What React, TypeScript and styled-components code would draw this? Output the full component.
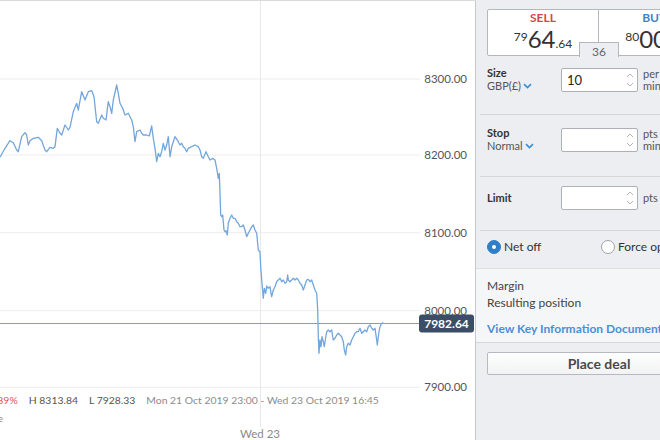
import React from 'react';
import styled, { createGlobalStyle } from 'styled-components';

const GlobalStyle = createGlobalStyle`
  html, body {
    margin: 0;
    padding: 0;
    background: #fff;
    overflow: hidden;
  }
  body {
    font-family: Lato, "Open Sans", "Liberation Sans", sans-serif;
    color: #333;
  }
`;

// traced price series (x, y in chart pixels)
const series = `0,157.3 5,148.3 10,140.7 13.3,142.7 16.7,150 18.3,151.7 21.7,136.7 25,132.7 26.7,135 28.3,145 30,140.7 33.3,138.3 38.3,137.3 41.7,140.7 45,150 46.7,151.7 50,147.3 53.3,148.3 55,146.7 57.3,128.3 60,133.3 61.7,135 65,125 68.3,130 70,127.3 73.3,111.7 76.7,103.3 78.3,110 81.7,91.7 85,100 88.3,91.7 91.7,90.7 94,96.7 96.7,121.7 98.3,123.3 101.7,115 103.3,118.3 106,120 108.3,101.7 110,106.7 111.7,113.3 113.3,100 116.7,85 118.3,93.3 120,103.3 122.7,108.3 125,115 128.3,113.3 130,116.7
131.7,120 133.3,126.7 135,141.7 136.7,131.7 140,130 141.7,133.3 143.3,135 146.7,135 149.3,136 151.7,126 153.3,138.3 155,148.3 156.7,161.7 158.3,153.3 160,156.7 161.7,151.7 163.3,143.3 165,150 166.7,145 168.3,136.7 170,156.7 171.7,146.7 175,136.7 178.3,141.7 180,145 181.7,143.3 183.3,146.7 185,148.3 186.7,151.7 188.3,148.3 191.7,146.7 195,145 198.3,146.7 200,150 201.7,156.7 203.3,158.3 206,151.7 208.3,156.7 210,160 212.7,158.3 215,160 216.7,168.3 218.3,178.3 219.3,173.3 220,193.3
220.7,215 221.7,216.7 222.7,215 224,230 225,231.7 226,230.7 227.3,235 228.3,223.3 230,218.3 231.7,215 233.3,218.3 235,218.3 236.7,221.7 238.3,223.3 240,226.7 241.7,226.7 243.3,225 245,230 246.7,236.7 248.3,233.3 250,230 251.7,226.7 253.3,225 255,230 256.7,233.3 258.3,250 260,251.7 260.7,266.7 261.7,280 263.3,298.3 264.3,288.3 265.7,293.3 266.7,286 268.3,288.3 270,286.7 271,293.3 271.7,296.7 273.3,290 275,286.7 276.7,281.7 278.3,280 280,278.3 281.7,281.7 283.3,280 285,283.3 286.7,281.7 287.7,275 288.3,280 290,281.7 291.7,280 293.3,278.3 295,280 296.7,278.3 298.3,280 300,283.3 301.7,285 303.3,290 305,285 306.7,280 308.3,279.3 310,281.7 311.7,280 313.3,285 315,290 316.7,293.3 317.7,310
318.3,336.7 319,353.3 320,340 321,346.7 322,336.7 323.3,341.7 324.3,346.7 325.3,340 326.7,331.7 328.3,330 330,331.7 331.7,330 332.7,336.7 333.3,340 335,338.3 336.7,335 338.3,333.3 340,335 341.7,336.7 343.3,341.7 344.3,350 345.7,355 346.7,346.7 348.3,343.3 350,345 351.7,340 353.3,336.7 355,333.3 356.7,331.7 358.3,331.7 360,328.3 361.7,333.3 363.3,331.7 365,330 366.7,331.7 368.3,326.7 370,325 371.7,328.3 373.3,330 375,328.3 376.7,340 377.3,345 378.3,336.7 379.3,330 380,326.7 381.7,323.3 383.3,322.7`;

const levels = [
  { y: 79, label: '8300.00' },
  { y: 155, label: '8200.00' },
  { y: 232.7, label: '8100.00' },
  { y: 310.7, label: '8000.00' },
  { y: 387.3, label: '7900.00' },
];

const Screen = styled.div`
  display: flex;
  width: 660px;
  height: 440px;
  overflow: hidden;
`;

const ChartPane = styled.div`
  position: relative;
  flex: 0 0 476px;
  height: 440px;
  box-sizing: border-box;
  border-top: 1px solid #d9dadc;
  border-right: 1px solid #c6c9cd;
  display: flex;
  flex-direction: column;
  justify-content: flex-end;
  padding-bottom: 15px;
  overflow: hidden;
`;

const ChartSvg = styled.svg`
  position: absolute;
  left: 0;
  top: 0;
  width: 475px;
  height: 439px;
  font-family: Lato, "Open Sans", sans-serif;
`;

const StatsRow = styled.div`
  position: relative;
  display: flex;
  gap: 11px;
  margin-left: -15px;
  height: 16px;
  font-size: 10.4px;
  line-height: 16px;
  white-space: nowrap;
`;

const Stat = styled.span<{ $tone?: 'down' | 'muted' }>`
  color: ${p => (p.$tone === 'down' ? '#e0525a' : p.$tone === 'muted' ? '#8c8c8c' : '#555')};
`;

const NoteRow = styled.div`
  position: relative;
  margin-top: 3px;
  height: 14px;
  font-size: 10px;
  line-height: 14px;
  color: #8c8c8c;
  white-space: nowrap;
`;

const NoteText = styled.span`
  display: inline-block;
  width: 200px;
  margin-left: -197px;
  text-align: right;
`;

const Ticket = styled.aside`
  flex: 0 0 246px;
  height: 440px;
  background: #eceef1;
  display: flex;
  flex-direction: column;
`;

const Quotes = styled.div`
  position: relative;
  display: grid;
  grid-template-columns: 1fr 1fr;
  margin: 9px 11px 0;
  height: 40px;
`;

const Quote = styled.div<{ $side: 'sell' | 'buy' }>`
  background: #fff;
  border: 1px solid #b4b8be;
  border-left-width: ${p => (p.$side === 'buy' ? 0 : 1)}px;
  border-radius: ${p => (p.$side === 'sell' ? '2px 0 0 2px' : '0 2px 2px 0')};
  box-sizing: border-box;
  text-align: center;
  padding-top: 1px;
`;

const Side = styled.div<{ $side: 'sell' | 'buy' }>`
  font-size: 12px;
  font-weight: 700;
  line-height: 14px;
  color: ${p => (p.$side === 'sell' ? '#d9434c' : '#3b84c8')};
`;

const Price = styled.div`
  line-height: 23px;
  color: #333;
  white-space: nowrap;
`;

const Lead = styled.span`
  font-size: 12px;
  vertical-align: 7px;
`;

const Pips = styled.span`
  font-size: 24px;
`;

const Tail = styled.span`
  font-size: 12px;
`;

const Spread = styled.div`
  position: absolute;
  left: 50%;
  top: 33px;
  transform: translateX(-50%);
  width: 40px;
  height: 15px;
  box-sizing: border-box;
  background: #eceef1;
  border: 1px solid #b4b8be;
  border-bottom: none;
  font-size: 12px;
  line-height: 18px;
  color: #666;
  text-align: center;
`;

const Field = styled.div<{ $h: number; $pt: number }>`
  height: ${p => p.$h}px;
  box-sizing: border-box;
  margin-left: 4px;
  padding: ${p => p.$pt}px 0 0 7px;
  border-bottom: 1px solid #d3d6da;
  display: flex;
  align-items: flex-start;
  white-space: nowrap;
`;

const FieldLabel = styled.div<{ $single?: boolean }>`
  width: 74px;
  flex-shrink: 0;
  font-size: 11px;
  line-height: ${p => (p.$single ? '24px' : '13px')};
  margin-top: ${p => (p.$single ? 0 : -2)}px;
`;

const Name = styled.div`
  font-weight: 700;
  color: #333;
`;

const Sub = styled.div`
  display: flex;
  align-items: center;
  gap: 2px;
  color: #555;
`;

const Stepper = styled.div`
  display: flex;
  align-items: center;
  justify-content: space-between;
  width: 77px;
  height: 24px;
  box-sizing: border-box;
  padding: 0 3px 0 5px;
  background: #fff;
  border: 1px solid #adb1b7;
  border-radius: 2px;
  font-size: 13px;
  color: #222;
`;

const Units = styled.div<{ $single?: boolean }>`
  margin-left: 5px;
  font-size: 11px;
  line-height: ${p => (p.$single ? '24px' : '12px')};
  color: #555;
`;

const Choices = styled.div`
  display: grid;
  grid-template-columns: 114px 114px;
  align-items: start;
  height: 37px;
  box-sizing: border-box;
  margin-left: 4px;
  padding: 9px 0 0 7px;
  white-space: nowrap;
`;

const Choice = styled.div`
  display: flex;
  align-items: center;
  gap: 3px;
  font-size: 12px;
  line-height: 14px;
  color: #333;
`;

const Dot = styled.span<{ $on?: boolean }>`
  width: 14px;
  height: 14px;
  box-sizing: border-box;
  border-radius: 50%;
  flex-shrink: 0;
  background: ${p => (p.$on ? '#2f7fc8' : '#fff')};
  border: 1px solid ${p => (p.$on ? '#2f7fc8' : '#9ea3a9')};
  display: flex;
  align-items: center;
  justify-content: center;

  &::after {
    content: '';
    width: 4px;
    height: 4px;
    border-radius: 50%;
    background: ${p => (p.$on ? '#fff' : 'transparent')};
  }
`;

const Summary = styled.div`
  background: #f5f6f8;
  border-top: 1px solid #dcdfe2;
  border-bottom: 1px solid #d3d6da;
  padding: 8px 11px 5px;
  font-size: 12px;
  line-height: 17px;
  color: #444;
  white-space: nowrap;
`;

const KidLink = styled.div`
  margin-top: 9px;
  color: #4a8fd6;
  font-weight: 700;
`;

const Actions = styled.div`
  padding: 9px 11px;
`;

const DealButton = styled.button`
  display: block;
  width: 224px;
  height: 23px;
  padding: 0;
  border: 1px solid #b6bac0;
  border-radius: 2px;
  background: linear-gradient(#fefefe, #f2f3f4);
  font-family: Lato, "Open Sans", sans-serif;
  font-size: 14px;
  font-weight: 700;
  color: #4a4a4a;
`;

const Chevron = () => (
  <svg width="9" height="6" viewBox="0 0 9 6">
    <path d="M1 1.2l3.5 3.3L8 1.2" fill="none" stroke="#3d8fd6" strokeWidth="1.7" />
  </svg>
);

const Spin = () => (
  <svg width="8" height="18" viewBox="0 0 8 18">
    <path d="M1 6l3-3 3 3M1 12l3 3 3-3" fill="none" stroke="#b4b4b4" strokeWidth="1" />
  </svg>
);

const PriceChart = () => (
  <ChartSvg viewBox="0 1 475 439">
    {levels.map(l => (
      <g key={l.label}>
        <line x1="0" x2="420" y1={l.y} y2={l.y} stroke="#ededed" strokeWidth="1" />
        <text x="467" y={l.y + 4} textAnchor="end" fontSize="11.5" fill="#555">
          {l.label}
        </text>
      </g>
    ))}
    <line x1="260.5" x2="260.5" y1="0" y2="427" stroke="#e8e8e8" strokeWidth="1" />
    <line x1="0" x2="420" y1="323.5" y2="323.5" stroke="#8f9cae" strokeWidth="1" />
    <polyline points={series} fill="none" stroke="#72a6dc" strokeWidth="1.3" strokeLinejoin="round" />
    <rect x="419" y="314.5" width="55" height="18" rx="3" fill="#3c4e67" />
    <text x="446.5" y="328" textAnchor="middle" fontSize="12" fontWeight="700" fill="#fff">
      7982.64
    </text>
    <text x="260" y="438" textAnchor="middle" fontSize="11.5" fill="#8a8a8a">
      Wed 23
    </text>
  </ChartSvg>
);

export default function App() {
  return (
    <>
      <GlobalStyle />
      <Screen>
        <ChartPane>
          <PriceChart />
          <StatsRow>
            <Stat $tone="down">-0.89%</Stat>
            <Stat>H 8313.84</Stat>
            <Stat>L 7928.33</Stat>
            <Stat $tone="muted">Mon 21 Oct 2019 23:00 - Wed 23 Oct 2019 16:45</Stat>
          </StatsRow>
          <NoteRow>
            <NoteText>Prices are indicative</NoteText>
          </NoteRow>
        </ChartPane>

        <Ticket>
          <Quotes>
            <Quote $side="sell">
              <Side $side="sell">SELL</Side>
              <Price>
                <Lead>79</Lead>
                <Pips>64</Pips>
                <Tail>.64</Tail>
              </Price>
            </Quote>
            <Quote $side="buy">
              <Side $side="buy">BUY</Side>
              <Price>
                <Lead>80</Lead>
                <Pips>00</Pips>
                <Tail>.64</Tail>
              </Price>
            </Quote>
            <Spread>36</Spread>
          </Quotes>

          <Field $h={66} $pt={19}>
            <FieldLabel>
              <Name>Size</Name>
              <Sub>
                GBP(£) <Chevron />
              </Sub>
            </FieldLabel>
            <Stepper>
              10
              <Spin />
            </Stepper>
            <Units>
              per point
              <br />
              min 0.5
            </Units>
          </Field>

          <Field $h={62} $pt={13}>
            <FieldLabel>
              <Name>Stop</Name>
              <Sub>
                Normal <Chevron />
              </Sub>
            </FieldLabel>
            <Stepper>
              <span />
              <Spin />
            </Stepper>
            <Units>
              pts away
              <br />
              min 8
            </Units>
          </Field>

          <Field $h={54} $pt={9}>
            <FieldLabel $single>
              <Name>Limit</Name>
            </FieldLabel>
            <Stepper>
              <span />
              <Spin />
            </Stepper>
            <Units $single>pts away</Units>
          </Field>

          <Choices>
            <Choice>
              <Dot $on />
              Net off
            </Choice>
            <Choice>
              <Dot />
              Force open
            </Choice>
          </Choices>

          <Summary>
            <div>Margin</div>
            <div>Resulting position</div>
            <KidLink>View Key Information Document DFB</KidLink>
          </Summary>

          <Actions>
            <DealButton type="button">Place deal</DealButton>
          </Actions>
        </Ticket>
      </Screen>
    </>
  );
}
